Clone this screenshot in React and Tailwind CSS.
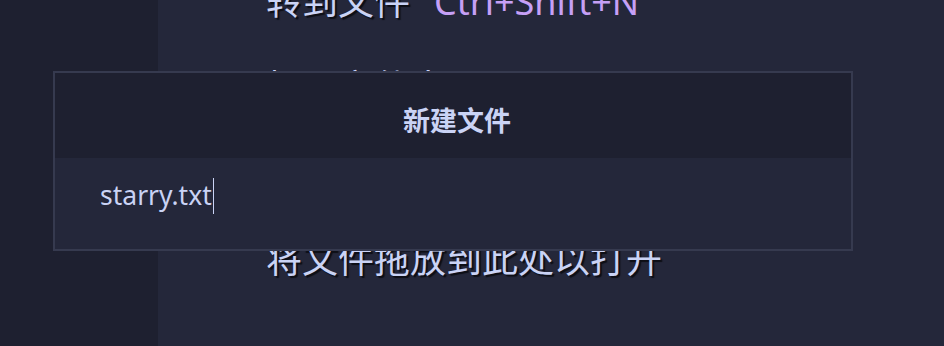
import React from 'react';

// Welcome screen lines behind the dialog
const lines = [
  { label: '转到文件', keys: 'Ctrl+Shift+N' },
  { label: '打开文件夹', keys: 'Ctrl+Shift+O' },
  { label: '最近的文件', keys: 'Ctrl+E' },
  { label: '将文件拖放到此处以打开', keys: '' },
];

const App = () => {
  return (
    <div
      className="relative flex h-[346px] w-[944px] overflow-hidden bg-[#24273a]"
      style={{ fontFamily: '"Noto Sans", "Noto Sans CJK SC", sans-serif' }}
    >
      <aside className="w-[158px] shrink-0 bg-[#1e2030]" />

      <main className="flex-1 pl-[108px]">
        <div className="-mt-[41px] flex flex-col">
          {lines.map((line) => (
            <div
              key={line.label}
              className="flex h-[86px] items-center whitespace-nowrap text-[36px] leading-none text-[#cad3f5] [text-shadow:2px_2px_1px_rgba(0,0,0,0.65)]"
            >
              <span>{line.label}</span>
              {line.keys && <span className="ml-[24px] text-[#c6a0f6] [text-shadow:none]">{line.keys}</span>}
            </div>
          ))}
        </div>
      </main>

      {/* New file dialog */}
      <div className="absolute left-[53px] top-[71px] flex w-[800px] flex-col border-2 border-[#363a4f] bg-[#24273a]">
        <div className="flex h-[85px] items-center justify-center bg-[#1e2030] pl-[8px] pt-[12px] text-[27px] font-bold text-[#cad3f5]">
          新建文件
        </div>
        <div className="flex h-[91px] items-center pl-[45px] pb-[16px] text-[26.5px] text-[#cad3f5]">
          <span>starry.txt</span>
          <span className="ml-px h-[36px] w-px bg-[#cad3f5]" />
        </div>
      </div>
    </div>
  );
};

export default App;
